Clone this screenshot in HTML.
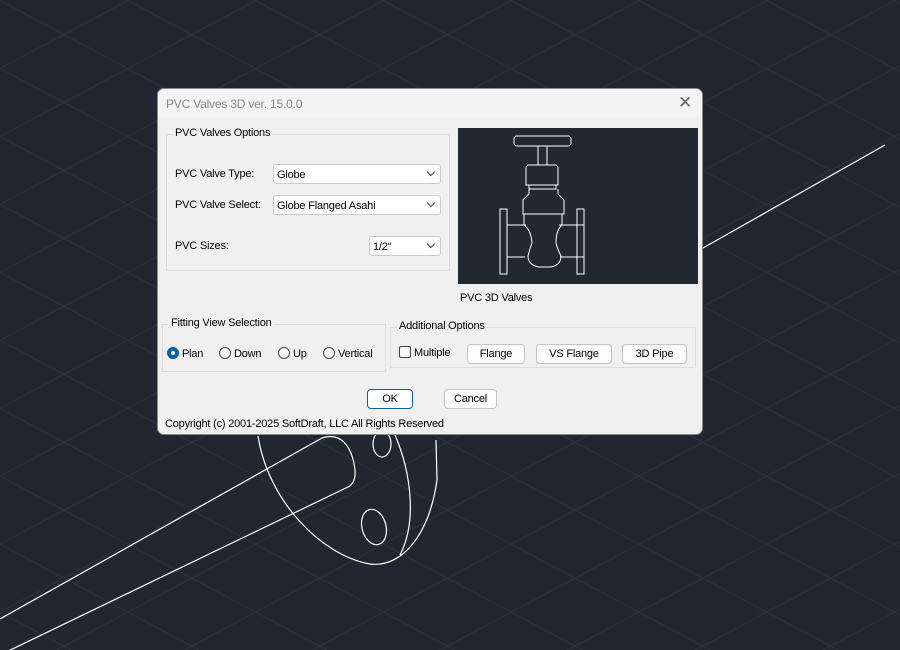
<!DOCTYPE html>
<html><head><style>
body{margin:0;width:900px;height:650px;overflow:hidden;background:#212730;font-family:"Liberation Sans",sans-serif;font-size:11px;letter-spacing:-0.2px;color:#000}
#bg{position:absolute;left:0;top:0}
.dlg{position:absolute;left:157px;top:88px;width:546px;height:347px;background:#f0f0f0;border:1px solid #8a8a8a;border-radius:7px;box-sizing:border-box;overflow:hidden}
.title{position:absolute;left:0;top:0;width:100%;height:28px;background:#f3f3f3;color:#8a8a8a;font-size:12px}
.tt{position:absolute;left:8px;top:8px}
.x{position:absolute;right:10px;top:4px;font-size:17px;color:#666}
.a{position:absolute;white-space:nowrap}
.grp{position:absolute;border:1px solid #dcdcdc;box-sizing:border-box}
.grp .lg{position:absolute;top:-8px;left:6px;background:#f0f0f0;padding:0 2px}
.cb{position:absolute;height:20px;background:#fff;border:1px solid #ccc;border-radius:3px;box-sizing:border-box;padding:4px 3px;}
.cb:after{content:"";position:absolute;right:6px;top:4px;width:5px;height:5px;border-right:1px solid #555;border-bottom:1px solid #555;transform:rotate(45deg)}
.btn{position:absolute;height:20px;background:#fdfdfd;border:1px solid #c4c4c4;border-radius:4px;box-sizing:border-box;text-align:center;line-height:19px}
.rd{position:absolute;width:12px;height:12px;border:1px solid #444;border-radius:50%;box-sizing:border-box;background:#f7f7f7}
</style></head><body>
<svg id="bg" width="900" height="650">
<defs>
<pattern id="p1" width="60" height="60" patternUnits="userSpaceOnUse" patternTransform="rotate(28)"><path d="M0 0.5H60" stroke="#2a313b" stroke-width="1"/></pattern>
<pattern id="p2" width="60" height="60" patternUnits="userSpaceOnUse" patternTransform="rotate(-28)"><path d="M0 0.5H60" stroke="#2a313b" stroke-width="1"/></pattern>
</defs>
<rect width="900" height="650" fill="url(#p1)"/>
<rect width="900" height="650" fill="url(#p2)"/>
<g stroke="#fff" fill="none" stroke-width="1.2">
<path d="M885 145L703 248"/>
<path d="M258 436C268 500 320 555 370 564C405 568 430 530 437 480L436 440"/>
<path d="M395 435C410 470 418 520 400 555" />
<path d="M0 619L322 438M0 655L350 486"/>
<path d="M322 438C340 432 352 445 355 470C356 480 352 485 348 487"/>
<ellipse cx="382" cy="444" rx="9" ry="13"/>
<ellipse cx="374" cy="527" rx="12" ry="18" transform="rotate(-15 374 527)"/>
</g>
</svg>
<div class="dlg">
<div class="title"><span class="tt">PVC Valves 3D ver. 15.0.0</span><span class="x">✕</span></div>
<div class="grp" style="left:8px;top:45px;width:284px;height:137px"><span class="lg">PVC Valves Options</span></div>
<div class="a" style="left:17px;top:79px">PVC Valve Type:</div>
<div class="cb" style="left:115px;top:75px;width:168px">Globe</div>
<div class="a" style="left:17px;top:110px">PVC Valve Select:</div>
<div class="cb" style="left:115px;top:106px;width:168px">Globe Flanged Asahi</div>
<div class="a" style="left:17px;top:151px">PVC Sizes:</div>
<div class="cb" style="left:211px;top:147px;width:72px">1/2"</div>
<svg class="a" style="left:300px;top:39px" width="240" height="156">
<rect width="240" height="156" fill="#212830"/>
<g stroke="#fff" fill="none" stroke-width="1">
<path d="M58 18L56 16V10L58 8H111L113 10V16L111 18Z"/>
<path d="M80 18V37M89 18V37"/>
<path d="M70 37H98L100 39V57H68V39Z"/>
<path d="M71 57V61H98V57"/>
<path d="M71 61V66L65 72V86H106V72L100 66V61"/>
<path d="M42 81H49V146H42ZM119 81H126V146H119Z"/>
<path d="M49 97H68M49 129H67M126 97H101M126 129H102"/>
<path d="M66 86V97Q73 102 74 115Q72 120 70 128Q70 137 81 139H93Q103 137 103 128Q99 120 98 115Q98 102 104 97V86"/>
</g>
</svg>
<div class="a" style="left:302px;top:203px">PVC 3D Valves</div>
<div class="grp" style="left:4px;top:235px;width:224px;height:48px"><span class="lg">Fitting View Selection</span></div>
<div class="rd" style="left:9px;top:258px;border:4px solid #0a5fb4;background:#fff"></div>
<div class="a" style="left:24px;top:259px">Plan</div>
<div class="rd" style="left:61px;top:258px"></div><div class="a" style="left:76px;top:259px">Down</div>
<div class="rd" style="left:120px;top:258px"></div><div class="a" style="left:135px;top:259px">Up</div>
<div class="rd" style="left:165px;top:258px"></div><div class="a" style="left:180px;top:259px">Vertical</div>
<div class="grp" style="left:232px;top:238px;width:306px;height:41px"><span class="lg">Additional Options</span></div>
<div style="position:absolute;left:241px;top:257px;width:12px;height:12px;border:1px solid #444;border-radius:2px;box-sizing:border-box;background:#fafafa"></div>
<div class="a" style="left:256px;top:258px">Multiple</div>
<div class="btn" style="left:309px;top:255px;width:58px">Flange</div>
<div class="btn" style="left:378px;top:255px;width:76px">VS Flange</div>
<div class="btn" style="left:464px;top:255px;width:65px">3D Pipe</div>
<div class="btn" style="left:209px;top:300px;width:46px;border:1px solid #0a5fb4">OK</div>
<div class="btn" style="left:286px;top:300px;width:53px">Cancel</div>
<div class="a" style="left:7px;top:329px">Copyright (c) 2001-2025 SoftDraft, LLC All Rights Reserved</div>
</div>
</body></html>
